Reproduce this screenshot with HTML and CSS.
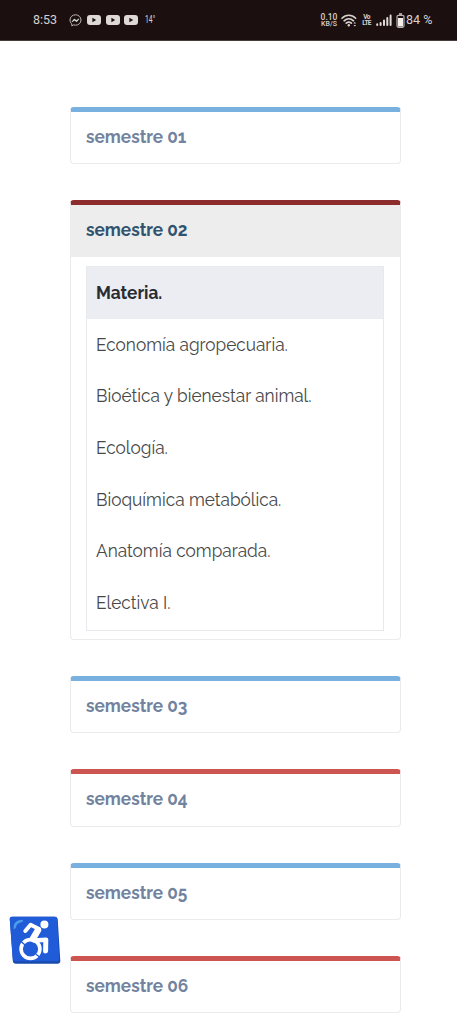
FILE: index.html
```html
<!DOCTYPE html>
<html lang="es">
<head>
<meta charset="utf-8">
<meta name="viewport" content="width=device-width">
<title>Semestres</title>
<link rel="stylesheet" href="styles.css">
</head>
<body>
<header class="status">
  <span class="clock">8:53</span>
  <svg class="messenger" width="13" height="13" viewBox="0 0 13 13"><path d="M6.500.8C3.300.8 1 3 1 6c0 1.700.7 3 1.800 3.900v2l1.800-1c.6.2 1.200.3 1.900.3 3.200 0 5.500-2.200 5.500-5.200S9.700.8 6.500.8Z" fill="none" stroke="#bdb5b3"/><path d="M3 7.700 5.300 5l2 1.500L10 4.900 7.700 7.700l-2-1.500Z" fill="#eee" stroke="#eee" stroke-width=".6"/></svg>
  <svg class="video" width="14" height="10" viewBox="0 0 14 10"><rect width="14" height="10" rx="3" fill="#ded9d6"/><path d="M5.400 2.800v4.400L9.200 5Z" fill="#1b100f"/></svg>
  <svg class="video" width="14" height="10" viewBox="0 0 14 10"><rect width="14" height="10" rx="3" fill="#ded9d6"/><path d="M5.400 2.800v4.400L9.200 5Z" fill="#1b100f"/></svg>
  <svg class="video" width="14" height="10" viewBox="0 0 14 10"><rect width="14" height="10" rx="3" fill="#ded9d6"/><path d="M5.400 2.800v4.400L9.200 5Z" fill="#1b100f"/></svg>
  <span class="temp">14°</span>
  <span class="rate"><span>0.10</span><span class="unit">KB/S</span></span>
  <svg class="wifi" width="17" height="13" viewBox="0 0 17 13"><g fill="none" stroke="#d6d0ce" stroke-width="1.600" stroke-linecap="round"><path d="M1 4.300C4.900.3 10.700.3 14.600 4.300M3.100 6.800c2.800-2.700 6.600-2.700 9.400 0M5.200 9.200c1.600-1.400 3.600-1.400 5.200 0"/></g><circle cx="7.800" cy="11.300" r="1.200" fill="#d6d0ce"/><path d="m12.500 9.500 1.300-1.500 1.300 1.500Zm0 1.500 1.300 1.500 1.300-1.500Z" fill="#d6d0ce"/></svg>
  <span class="volte"><span>Vo</span><span>LTE</span></span>
  <svg class="signal" width="16" height="12" viewBox="0 0 16 12"><path d="M1.200 11v-.7M4.600 11V9M8 11V6.500M11.300 11V4M14.600 11V1.500" stroke="#ded8d6" stroke-width="2" stroke-linecap="round"/></svg>
  <svg class="battery" width="9" height="15" viewBox="0 0 9 15"><path d="M3 1h3" stroke="#ccc" stroke-width="1.500"/><rect x="1" y="2.300" width="7" height="12" rx="1.500" fill="none" stroke="#bbb4b2" stroke-width="1.200"/><path d="M2 5h5v8.500H2Z" fill="#f1eeec"/></svg>
  <span class="percent">84 %</span>
</header>
<main class="list">
  <section class="panel"><h2 class="title"><span class="label">semestre 01</span></h2></section>
  <section class="panel open">
    <h2 class="title"><span class="label">semestre 02</span></h2>
    <table class="subjects">
      <thead><tr><th><span class="label">Materia.</span></th></tr></thead>
      <tbody>
        <tr><td><span class="label">Economía agropecuaria.</span></td></tr>
        <tr><td><span class="label">Bioética y bienestar animal.</span></td></tr>
        <tr><td><span class="label">Ecología.</span></td></tr>
        <tr><td><span class="label">Bioquímica metabólica.</span></td></tr>
        <tr><td><span class="label">Anatomía comparada.</span></td></tr>
        <tr><td><span class="label">Electiva I.</span></td></tr>
      </tbody>
    </table>
  </section>
  <section class="panel"><h2 class="title"><span class="label">semestre 03</span></h2></section>
  <section class="panel red"><h2 class="title"><span class="label">semestre 04</span></h2></section>
  <section class="panel"><h2 class="title"><span class="label">semestre 05</span></h2></section>
  <section class="panel red"><h2 class="title"><span class="label">semestre 06</span></h2></section>
</main>
<button class="access" aria-label="Accesibilidad">
  <svg width="52" height="49" viewBox="0 0 52 49">
    <path d="M3 .8h43q2.500 0 2.700 2.500l2.600 41.500q.2 3-3 3H7q-3 0-3.200-3L.8 3.500Q.6.800 3 .8Z" fill="#194aae"/>
    <path d="M3 .8h43q2 0 2.200 2l2 40q.1 2.500-2.500 2.500H6.500Q4 45.300 3.800 43L.8 3.500Q.6.800 3 .8Z" fill="#205bd8"/>
    <path d="M4.500 13Q4 3.800 14 3.800q.5 2.200-2.300 2.700-3.700.8-4.500 4-.6 2.600-2.700 2.500Z" fill="#4b9ee9"/>
    <circle cx="35.400" cy="8.600" r="4" fill="#fff"/>
    <g fill="none" stroke="#fff" stroke-linejoin="round" stroke-linecap="round">
      <path d="m16.300 15 5.300-6.300 8.500 4.300" stroke-width="4"/>
      <path d="m29 14.200-5 8.500" stroke-width="6.500"/>
      <path d="m25 24.500 12-.8" stroke-width="4.500"/>
      <path d="m36.800 24.500-.2 10.500" stroke-width="5"/>
      <circle cx="21.500" cy="33" r="9.400" stroke-width="3.600"/>
    </g>
    <path d="m11.500 25 4.500 4M27 38.300l6 4.500" fill="none" stroke="#205bd8" stroke-width="1.300"/>
  </svg>
</button>
</body>
</html>
```
FILE: styles.css
```css
* { box-sizing: border-box; }
body { margin: 0; height: 1024px; overflow: hidden; background: #fff; font-family: Raleway, Lato, sans-serif; }
.status { display: flex; align-items: center; height: 41px; padding: 0 24px 0 33px; background: #1b100f; border-bottom: 1px solid #463d3b; color: #d7d1cf; font: 12px/14px Roboto, sans-serif; white-space: nowrap; }
.clock { width: 36px; font-size: 12.500px; }
.messenger { margin-right: 5px; }
.video { margin-right: 4.500px; }
.temp { margin-left: 2px; width: 10px; font-size: 10px; transform: scaleX(.68); transform-origin: left; }
.rate { display: flex; flex-direction: column; align-items: center; width: 18px; margin-left: auto; font: 500 8.500px/8px Roboto, sans-serif; }
.unit { font-size: 7px; line-height: 6px; }
.wifi { margin-left: 3px; }
.volte { display: flex; flex-direction: column; align-items: center; width: 9px; margin-left: 4px; font: bold 6.500px/6.500px Roboto, sans-serif; letter-spacing: -.7px; }
.signal { margin-left: 5px; }
.battery { margin-left: 4px; }
.percent { width: 27px; margin-left: 1px; font-size: 12.500px; }
.list { display: flex; flex-direction: column; gap: 36px; padding: 66px 56px 0 70px; }
.panel { flex: none; height: 57.400px; border: 1px solid #ebebeb; border-top: 5px solid #78b1e0; border-radius: 4px; overflow: hidden; }
.red { border-top-color: #cd5551; }
.open { height: 439.400px; border-top-color: #8d2c2d; }
.title { margin: 0; height: 52px; padding: 0 15px; color: #7283a0; font-size: 18.200px; line-height: 50px; font-weight: 700; }
.open .title { background: #ededed; color: #30536f; }
.label { display: inline-block; transform: scaleX(.947); transform-origin: left; white-space: nowrap; }
.subjects { width: 298px; margin: 9px 15px 0; border: 1px solid #e8e9ed; border-collapse: separate; border-spacing: 0; color: #484848; font-size: 18.200px; }
th { height: 52px; padding: 0 9px 1px; background: #ebedf3; color: #292c31; text-align: left; font-weight: 700; }
td { height: 51.700px; padding: 0 9px 2px; font-weight: 400; }
.access { position: absolute; left: 9px; top: 916px; width: 52px; height: 49px; padding: 0; border: 0; background: none; }
.access svg { display: block; }
```
